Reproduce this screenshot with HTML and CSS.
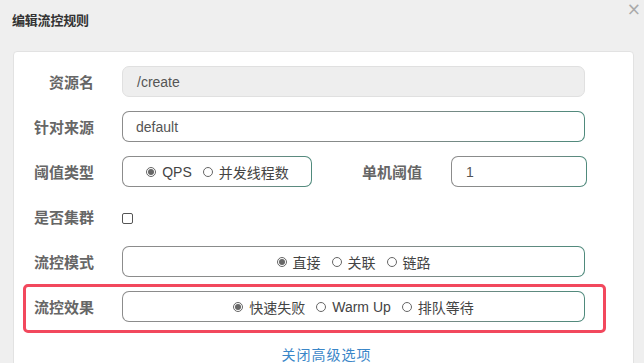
FILE: index.html
```html
<!DOCTYPE html>
<html lang="zh">
<head>
<meta charset="utf-8">
<link rel="stylesheet" href="styles.css">
</head>
<body>
<div class="dialog">
  <div class="header">
    <h1 class="title">编辑流控规则</h1>
    <span class="close">×</span>
  </div>
  <div class="panel">
    <div class="row">
      <label class="lbl">资源名</label>
      <div class="field disabled">/create</div>
    </div>
    <div class="row">
      <label class="lbl">针对来源</label>
      <div class="field">default</div>
    </div>
    <div class="row">
      <label class="lbl">阈值类型</label>
      <div class="field radios small">
        <span class="radio on"></span><span class="rtext">QPS</span>
        <span class="radio"></span><span class="rtext">并发线程数</span>
      </div>
      <label class="lbl2">单机阈值</label>
      <div class="field num">1</div>
    </div>
    <div class="row">
      <label class="lbl">是否集群</label>
      <span class="check"></span>
    </div>
    <div class="row">
      <label class="lbl">流控模式</label>
      <div class="field radios">
        <span class="radio on"></span><span class="rtext">直接</span>
        <span class="radio"></span><span class="rtext">关联</span>
        <span class="radio"></span><span class="rtext">链路</span>
      </div>
    </div>
    <div class="row mark">
      <label class="lbl">流控效果</label>
      <div class="field radios">
        <span class="radio on"></span><span class="rtext">快速失败</span>
        <span class="radio"></span><span class="rtext">Warm Up</span>
        <span class="radio"></span><span class="rtext">排队等待</span>
      </div>
    </div>
    <div class="more"><a class="link">关闭高级选项</a></div>
  </div>
</div>
</body>
</html>
```
FILE: styles.css
```css
html, body {
  margin: 0;
  padding: 0;
  background: #efefef;
  overflow: hidden;
  height: 363px;
}
body {
  font-family: "Liberation Sans", "Noto Sans CJK SC", sans-serif;
  color: #555;
}
.dialog {
  padding: 0 8px 0 13px;
}
.header {
  display: flex;
  justify-content: space-between;
  align-items: flex-start;
  height: 51px;
}
.title {
  margin: 12px 0 0 -1px;
  font-family: "Noto Sans CJK SC", sans-serif;
  font-size: 13px;
  font-weight: bold;
  color: #333;
  letter-spacing: -0.2px;
  line-height: 16px;
}
.close {
  font-size: 17px;
  line-height: 17px;
  color: #aaa;
  margin-top: 1px;
  margin-right: -5px;
  font-family: "DejaVu Sans", sans-serif;
}
.panel {
  background: #fff;
  border: 1px solid #e2e2e2;
  border-radius: 4px;
  width: 621px;
  height: 330px;
  padding-top: 14px;
  box-sizing: border-box;
}
.row {
  display: flex;
  align-items: center;
  height: 31px;
  margin-bottom: 14px;
}
.lbl, .lbl2 {
  font-family: "Noto Sans CJK SC", sans-serif;
  font-weight: bold;
  font-size: 15px;
  color: #666;
}
.lbl {
  width: 80px;
  text-align: right;
  margin-right: 28px;
}
.lbl2 {
  margin-left: 50px;
  margin-right: 29px;
}
.field {
  box-sizing: border-box;
  width: 463px;
  height: 31px;
  border-radius: 7px;
  border: 1px solid transparent;
  background: linear-gradient(#fff, #fff) padding-box,
              linear-gradient(to right, #8c8c8c, #858a89 60%, #4f8a7c) border-box;
  padding-left: 13px;
  display: flex;
  align-items: center;
  font-size: 14px;
  color: #555;
}
.field.disabled {
  background: #eeeeee;
  border: 1px solid #e0e0e0;
  padding-left: 14px;
}
.field.num {
  width: 136px;
  padding-left: 14px;
}
.radios {
  justify-content: center;
  padding-left: 0;
}
.radios.small {
  width: 190px;
  padding-left: 1px;
}
.radio {
  width: 10px;
  height: 10px;
  box-sizing: border-box;
  border: 1px solid #666;
  border-radius: 50%;
  margin-right: 6px;
  position: relative;
  flex: none;
}
.radio.on::after {
  content: "";
  position: absolute;
  left: 1px;
  top: 1px;
  width: 6px;
  height: 6px;
  border-radius: 50%;
  background: #666;
}
.rtext {
  font-family: "Liberation Sans", "Noto Sans CJK SC", sans-serif;
  font-size: 14px;
  color: #444;
  margin-right: 11px;
}
.rtext:last-child {
  margin-right: 0;
}
.check {
  width: 11px;
  height: 11px;
  box-sizing: border-box;
  border: 1px solid #555;
  border-radius: 2px;
  margin-top: 3px;
}
.mark {
  position: relative;
}
.mark::after {
  content: "";
  position: absolute;
  left: 9px;
  top: -7px;
  width: 583px;
  height: 49px;
  box-sizing: border-box;
  border: 3px solid #f2485d;
  border-radius: 5px;
}
.more {
  text-align: center;
  padding-top: 8px;
  padding-left: 6px;
}
.link {
  font-family: "Noto Sans CJK SC", sans-serif;
  font-size: 14px;
  letter-spacing: 1px;
  color: #3a86c8;
}
```
